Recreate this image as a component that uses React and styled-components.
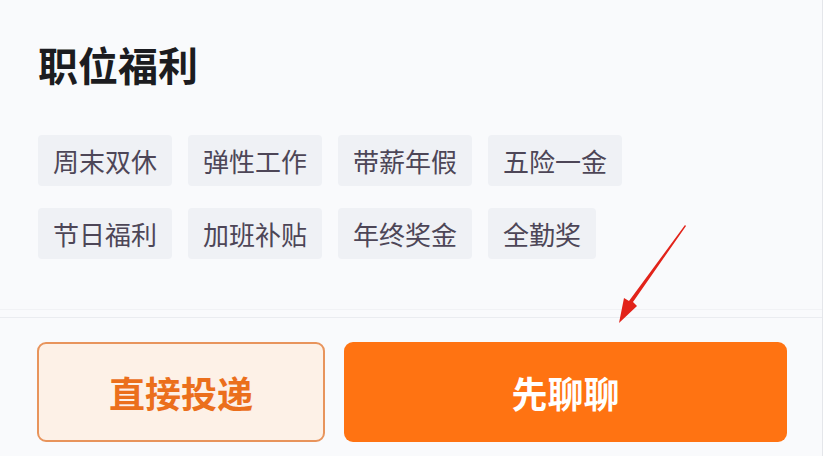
import React from "react";
import styled, { createGlobalStyle } from "styled-components";

const GlobalStyle = createGlobalStyle`
  html, body {
    margin: 0;
    padding: 0;
    background: #ffffff;
  }
  body {
    font-family: "Noto Sans CJK SC", "Noto Sans", sans-serif;
  }
`;

const Page = styled.div`
  position: relative;
  width: 822px;
  height: 456px;
  overflow: hidden;
  background: #f9fafc;
  border-right: 1px solid #e4e6ea;
  display: flex;
  flex-direction: column;
`;

const Benefits = styled.section`
  box-sizing: border-box;
  height: 310px;
  padding: 44px 0 0 38px;
  border-bottom: 1px solid #f1f2f5;
`;

const Title = styled.h2`
  margin: 0;
  font-size: 40px;
  line-height: 1;
  font-weight: 700;
  color: #1c1c20;
`;

const TagList = styled.div`
  margin-top: 51px;
  width: 600px;
  display: flex;
  flex-wrap: wrap;
  column-gap: 16px;
  row-gap: 22px;
`;

const Tag = styled.span`
  height: 51px;
  padding: 0 15px;
  display: inline-flex;
  align-items: center;
  box-sizing: border-box;
  background: #eff1f5;
  border-radius: 4px;
  font-size: 26px;
  color: #4d4657;
`;

const Footer = styled.div`
  margin-top: 7px;
  border-top: 1px solid #eaecf0;
  padding: 24px 35px 0 37px;
  display: flex;
  gap: 19px;
`;

const Button = styled.button`
  height: 100px;
  box-sizing: border-box;
  border-radius: 9px;
  font-family: "Noto Sans CJK SC", sans-serif;
  font-size: 36px;
  font-weight: 700;
  cursor: pointer;
  border: ${(p) => (p.$primary ? "none" : "2px solid #e8945c")};
  background: ${(p) => (p.$primary ? "#ff7312" : "#fdf1e7")};
  color: ${(p) => (p.$primary ? "#ffffff" : "#eb6f1c")};
  width: ${(p) => (p.$primary ? "auto" : "288px")};
  flex: ${(p) => (p.$primary ? "1" : "none")};
`;

const Arrow = styled.svg`
  position: absolute;
  left: 612px;
  top: 222px;
  width: 80px;
  height: 106px;
  pointer-events: none;
`;

const tags = [
  "周末双休",
  "弹性工作",
  "带薪年假",
  "五险一金",
  "节日福利",
  "加班补贴",
  "年终奖金",
  "全勤奖",
];

export default function App() {
  return (
    <>
      <GlobalStyle />
      <Page>
        <Benefits>
          <Title>职位福利</Title>
          <TagList>
            {tags.map((t) => (
              <Tag key={t}>{t}</Tag>
            ))}
          </TagList>
        </Benefits>
        <Footer>
          <Button>直接投递</Button>
          <Button $primary>先聊聊</Button>
        </Footer>
        <Arrow viewBox="0 0 80 106">
          {/* tapered shaft + head, tip at (7,101) */}
          <polygon
            points="73,3 74,4 21,80 25,84 7,101 12,76 17,79"
            fill="#e2231a"
          />
        </Arrow>
      </Page>
    </>
  );
}
